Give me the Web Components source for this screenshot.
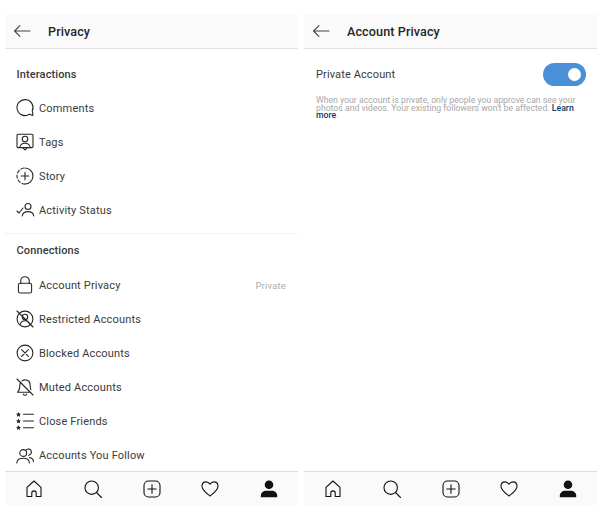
<!DOCTYPE html>
<html lang="en"><head><meta charset="utf-8"><title>Privacy</title>
<style>
html,body{margin:0;background:#fff}
body{font-family:Roboto,"Liberation Sans",sans-serif;width:606px;height:517px;overflow:hidden}
</style></head><body>
<ig-page>
  <ig-screen title="Privacy" style="--title-gap:17px;--back-left:8px">
    <ig-section>Interactions</ig-section>
    <ig-row icon="comment">Comments</ig-row>
    <ig-row icon="tag">Tags</ig-row>
    <ig-row icon="story">Story</ig-row>
    <ig-row icon="activity">Activity Status</ig-row>
    <ig-divider></ig-divider>
    <ig-section style="--sec-top:6px;--sec-bottom:8px">Connections</ig-section>
    <ig-row icon="lock" value="Private">Account Privacy</ig-row>
    <ig-row icon="restrict">Restricted Accounts</ig-row>
    <ig-row icon="blocked">Blocked Accounts</ig-row>
    <ig-row icon="muted">Muted Accounts</ig-row>
    <ig-row icon="close">Close Friends</ig-row>
    <ig-row icon="follow">Accounts You Follow</ig-row>
  </ig-screen>
  <ig-screen title="Account Privacy" style="--title-gap:17px;--back-left:8px">
    <ig-toggle-row>Private Account</ig-toggle-row>
    <ig-note>When your account is private, only people you approve can see your photos and videos. Your existing followers won't be affected. <b>Learn more</b>.</ig-note>
  </ig-screen>
</ig-page>
<script>
const star=(x,y)=>`M${x} ${y-2.4}l.75 1.55 1.7.25-1.2 1.2.3 1.7-1.55-.8-1.55.8.3-1.7-1.2-1.2 1.7-.25z`;
const ICONS={
 back:'<path style="stroke:#444" d="M17 9H1.6M6.900 3.700 1.600 9l5.300 5.300"/>',
 comment:'<path d="M13.6 15.15A8 8 0 1 1 16.25 12l.75 3.800c.1.4-.1.7-.4.6z"/>',
 tag:'<rect x="1" y="1.200" width="16" height="13.400" rx="1.200"/><circle cx="9" cy="6" r="2.800"/><path d="M3.800 14.400c.4-2.800 2.400-4.200 5.200-4.200s4.800 1.400 5.200 4.200M7 14.800l2 2 2-2"/>',
 story:'<path d="M9 1A8 8 0 0 1 9 17"/><path d="M9 17A8 8 0 0 1 9 1" stroke-dasharray="3 2.200"/><path d="M9 5.200v7.600M5.200 9h7.600"/>',
 activity:'<circle cx="12" cy="5.500" r="3"/><path d="M6.200 15c.4-2.800 2.600-4.400 5.800-4.400s5.400 1.600 5.800 4.400M1 10l2 2 4-5"/>',
 lock:'<rect x="2.400" y="7.300" width="13.200" height="9.700" rx="1.800"/><path d="M4.700 7.300V5a4.300 4.300 0 0 1 8.600 0v2.300"/>',
 restrict:'<circle cx="9" cy="9" r="7.900"/><circle cx="9" cy="7" r="2.700"/><path d="M4.400 14.300c.4-2.400 2.200-3.600 4.600-3.600s4.200 1.200 4.600 3.600M1 1l16 16"/>',
 blocked:'<circle cx="9" cy="9" r="7.900"/><path d="M5.600 5.600l6.800 6.800M12.400 5.600l-6.800 6.800"/>',
 muted:'<path d="M4.500 4.700C3.900 5.600 3.800 6.600 3.800 8c0 3.600-1 5-2.300 6.300h12.200M6 2.900C6.900 2.200 7.900 1.900 9 1.900c3.200 0 5.200 2.400 5.200 5.700 0 1.600.2 2.900.7 4M7.300 16.200c.4.6 1 1 1.700 1s1.300-.4 1.700-1M1 1l16 16"/>',
 close:`<path d="M7.500 2.300h10M7.500 9h10M7.500 15.700h10"/><path class="f" d="${star(2.5,2.4)}${star(2.5,9)}${star(2.5,15.6)}"/>`,
 follow:'<circle cx="7.200" cy="7" r="3.400"/><path d="M.8 17c.2-3.300 2.800-4.700 6.400-4.700s6 1.400 6.200 4.700M10.500 3.600a3.100 3.100 0 1 1 2 5.600M13.600 11.600c2.400.3 3.700 1.700 3.800 4"/>',
 home:'<path d="M2 7.400 9 1l7 6.400v9.100h-4.800v-3.400a2.200 2.200 0 0 0-4.400 0v3.400H2z"/>',
 search:'<circle cx="7.700" cy="7.700" r="6.700"/><path d="M12.500 12.500l5 5"/>',
 add:'<rect x="1" y="1" width="16" height="16" rx="4.500"/><path d="M9 4.800v8.400M4.800 9h8.400"/>',
 heart:'<path d="M9 16C6 13.500 1 10.500 1 6.300 1 3.500 3 1.900 5.100 1.900c1.700 0 3 .9 3.900 2.300.9-1.400 2.200-2.300 3.900-2.300C15 1.900 17 3.500 17 6.300 17 10.500 12 13.500 9 16z"/>',
 profile:'<circle class="f" cx="9" cy="4.700" r="4.300"/><path class="f" d="M.8 17.200v-1.700c0-3 3-4.700 5-4.700h6.400c2 0 5 1.700 5 4.700v1.700z"/>'
};
function def(name,css,html){
  customElements.define(name,class extends HTMLElement{
    constructor(){super();this.attachShadow({mode:'open'})}
    connectedCallback(){this.shadowRoot.innerHTML='<style>'+css+'</style>'+(typeof html==='function'?html(this):html)}
  });
}
def('ig-icon',`:host{display:block;width:18px;height:18px;flex:none;color:#262626}
 svg{display:block;overflow:visible}*{fill:none;stroke:currentColor;stroke-width:1.100;stroke-linecap:round;stroke-linejoin:round}.f{fill:currentColor;stroke:none}`,
 h=>`<svg viewBox="0 0 18 18" width="18" height="18">${ICONS[h.getAttribute('name')]}</svg>`);
def('ig-page',`:host{display:flex;gap:6px;padding:14px 0 0 5px;height:491px}`,'<slot></slot>');
def('ig-screen',`:host{display:flex;flex-direction:column;width:293px;height:491px;background:#fff}
 header{flex:none;box-sizing:border-box;height:35px;background:#fafafa;border-bottom:1px solid #e2e2e2;display:flex;align-items:center;padding-left:var(--back-left);gap:var(--title-gap);font-size:12.600px;font-weight:500;color:#262626;letter-spacing:.1px}
 main{flex:1;min-height:0;overflow:hidden}
 nav{flex:none;box-sizing:border-box;height:34px;background:#fafafa;border-top:1px solid #dcdcdc;display:flex;justify-content:space-between;align-items:center;padding:0 20px}
 ig-icon{color:#111}`,
 h=>`<header><ig-icon name="back"></ig-icon><span>${h.getAttribute('title')}</span></header><main><slot></slot></main>
 <nav><ig-icon name="home"></ig-icon><ig-icon name="search"></ig-icon><ig-icon name="add"></ig-icon><ig-icon name="heart"></ig-icon><ig-icon name="profile"></ig-icon></nav>`);
def('ig-section',`:host{display:flex;align-items:center;height:20px;margin-top:var(--sec-top,15px);margin-bottom:var(--sec-bottom,7px);padding-left:11.500px;font-size:11px;letter-spacing:.12px;font-weight:500;color:#3a3a3a}`,'<slot></slot>');
def('ig-row',`:host{display:flex;align-items:center;height:34px;padding:0 12px 0 11px;gap:5px;font-size:11px;color:#3a3a3a;letter-spacing:.17px}
 .v{margin-left:auto;font-size:9.500px;color:#aeaeae}span{flex:none}`,
 h=>`<ig-icon name="${h.getAttribute('icon')}"></ig-icon><span><slot></slot></span>${h.hasAttribute('value')?`<span class="v">${h.getAttribute('value')}</span>`:''}`);
def('ig-divider',`:host{display:block;height:1px;background:#f2f2f2;margin-top:6px}`,'');
def('ig-toggle-row',`:host{display:flex;align-items:center;justify-content:space-between;height:24px;margin-top:13px;padding:0 11px 0 12px;font-size:11px;color:#3a3a3a;letter-spacing:.12px}
 .t{box-sizing:border-box;width:43px;height:23px;border-radius:12px;background:#4a90d9;display:flex;align-items:center;justify-content:flex-end;padding-right:5px}
 .t i{display:block;width:13px;height:13px;border-radius:50%;background:#fff}`,
 '<span><slot></slot></span><div class="t" role="switch" aria-checked="true"><i></i></div>');
def('ig-note',`:host{display:block;margin-top:11px;padding:0 12px;font-size:8.700px;line-height:7.600px;color:#a8a8a8}
 ::slotted(b){font-weight:500;color:#0a3a66}`,'<slot></slot>');
</script>
</body></html>
